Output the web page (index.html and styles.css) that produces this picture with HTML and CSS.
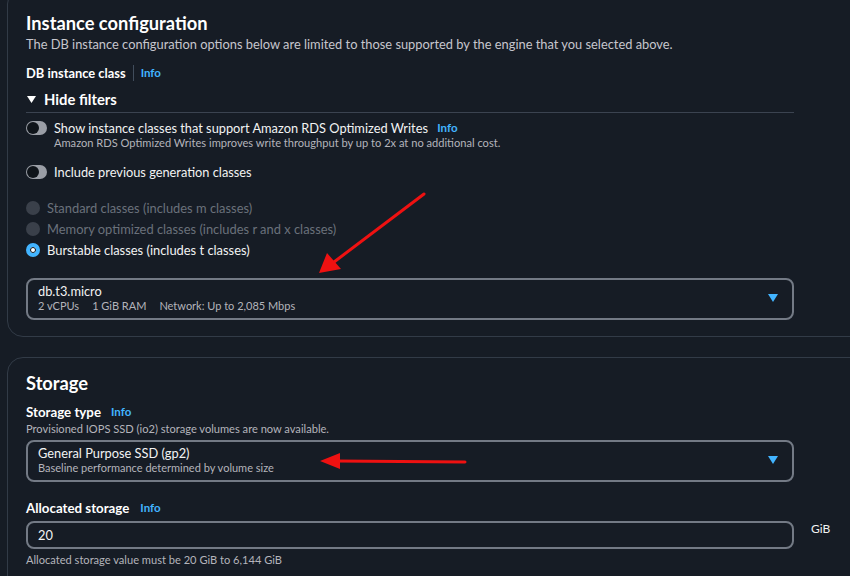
FILE: index.html
```html
<!DOCTYPE html>
<html lang="en">
<head>
<meta charset="utf-8">
<title>Instance configuration</title>
<link rel="stylesheet" href="styles.css">
</head>
<body>
<div class="page">
  <section class="panel panel-first">
    <h2 class="title">Instance configuration</h2>
    <p class="desc">The DB instance configuration options below are limited to those supported by the engine that you selected above.</p>
    <div class="label-row row-class">
      <span class="label">DB instance class</span>
      <span class="divider"></span>
      <span class="info">Info</span>
    </div>
    <div class="filters-head">
      <svg class="tri" width="9" height="7" viewBox="0 0 9 7"><path d="M0 0h9L4.5 7z" fill="#ffffff"/></svg>
      <span>Hide filters</span>
    </div>
    <div class="toggle-row toggle-first">
      <span class="toggle"><span class="knob"></span></span>
      <div class="toggle-text">
        <div class="toggle-label">Show instance classes that support Amazon RDS Optimized Writes <span class="info info-inline">Info</span></div>
        <div class="sub">Amazon RDS Optimized Writes improves write throughput by up to 2x at no additional cost.</div>
      </div>
    </div>
    <div class="toggle-row toggle-second">
      <span class="toggle"><span class="knob"></span></span>
      <div class="toggle-text">
        <div class="toggle-label">Include previous generation classes</div>
      </div>
    </div>
    <div class="radios">
      <div class="radio disabled"><span class="dot"></span><span>Standard classes (includes m classes)</span></div>
      <div class="radio disabled"><span class="dot"></span><span>Memory optimized classes (includes r and x classes)</span></div>
      <div class="radio checked"><span class="dot"></span><span>Burstable classes (includes t classes)</span></div>
    </div>
    <div class="select select-class">
      <div class="select-body">
        <div class="select-main">db.t3.micro</div>
        <div class="select-sub"><span>2 vCPUs</span><span>1 GiB RAM</span><span>Network: Up to 2,085 Mbps</span></div>
      </div>
      <svg class="caret" width="10" height="8" viewBox="0 0 10 8"><path d="M0 0h10L5 8z" fill="#42b4ff"/></svg>
    </div>
  </section>

  <section class="panel panel-second">
    <h2 class="title">Storage</h2>
    <div class="label-row row-storage">
      <span class="label">Storage type</span>
      <span class="info">Info</span>
    </div>
    <div class="sub sub-storage">Provisioned IOPS SSD (io2) storage volumes are now available.</div>
    <div class="select select-storage">
      <div class="select-body">
        <div class="select-main">General Purpose SSD (gp2)</div>
        <div class="select-sub">Baseline performance determined by volume size</div>
      </div>
      <svg class="caret" width="10" height="8" viewBox="0 0 10 8"><path d="M0 0h10L5 8z" fill="#42b4ff"/></svg>
    </div>
    <div class="label-row row-alloc">
      <span class="label">Allocated storage</span>
      <span class="info">Info</span>
    </div>
    <div class="input-row">
      <div class="input">20</div>
      <span class="unit">GiB</span>
    </div>
    <div class="sub sub-help">Allocated storage value must be 20 GiB to 6,144 GiB</div>
  </section>

  <svg class="arrows" width="850" height="576" viewBox="0 0 850 576">
    <line x1="424" y1="194" x2="334" y2="262" stroke="#ee1111" stroke-width="3" stroke-linecap="round"/>
    <path d="M319 273 L327 253 L341 269 Z" fill="#ee1111"/>
    <line x1="465" y1="462" x2="336" y2="461" stroke="#ee1111" stroke-width="3" stroke-linecap="round"/>
    <path d="M320 461 L340 453 L340 469 Z" fill="#ee1111"/>
  </svg>
</div>
</body>
</html>
```

FILE: styles.css
```css
* { box-sizing: border-box; }
html, body {
  margin: 0;
  padding: 0;
  background: #161c25;
  overflow: hidden;
}
body {
  font-family: Lato, "Open Sans", "Liberation Sans", sans-serif;
  color: #f2f3f3;
  width: 850px;
  height: 576px;
}
.page {
  position: relative;
  width: 850px;
  height: 576px;
  overflow: hidden;
  display: flex;
  flex-direction: column;
}
.panel {
  margin-left: 7px;
  width: 900px;
  border: 1px solid #323b47;
  border-radius: 16px;
  padding-left: 18px;
  padding-right: 0;
  display: flex;
  flex-direction: column;
  align-items: flex-start;
  flex-shrink: 0;
}
.panel-first {
  margin-top: -12px;
  padding-top: 23px;
  padding-bottom: 16px;
}
.panel-second {
  margin-top: 20px;
  padding-top: 14px;
  padding-bottom: 40px;
}
.title {
  margin: 0;
  font-size: 18.3px;
  line-height: 22px;
  font-weight: 700;
  color: #ffffff;
}
.desc {
  margin: 2px 0 0;
  font-size: 12.85px;
  line-height: 16px;
  color: #c6c6cd;
}
.label-row {
  display: flex;
  align-items: center;
  font-size: 12.9px;
  line-height: 16px;
}
.row-class { margin-top: 13px; }
.row-storage { margin-top: 10px; font-size: 13.3px; }
.row-alloc { margin-top: 18px; font-size: 13.3px; }
.label {
  font-weight: 700;
  color: #ffffff;
}
.divider {
  width: 1px;
  height: 16px;
  background: #414d5c;
  margin: 0 7px 0 7px;
}
.info {
  color: #42b4ff;
  font-weight: 700;
  font-size: 11.5px;
  line-height: 16px;
}
.row-storage .info { margin-left: 10px; }
.row-alloc .info { margin-left: 11px; }
.filters-head {
  margin-top: 8px;
  width: 768px;
  display: flex;
  align-items: center;
  font-size: 14.8px;
  line-height: 20px;
  font-weight: 700;
  color: #ffffff;
  padding-bottom: 3px;
  border-bottom: 1px solid #3b4350;
  height: 24px;
}
.tri { margin-left: 1px; margin-right: 8px; }
.toggle-row {
  display: flex;
  align-items: flex-start;
}
.toggle-first { margin-top: 7px; }
.toggle-second { margin-top: 14px; }
.toggle {
  width: 21px;
  height: 14px;
  border-radius: 7px;
  background: #9a9ea6;
  margin-top: 1px;
  margin-right: 7px;
  position: relative;
  flex-shrink: 0;
  display: flex;
  align-items: center;
  padding-left: 1px;
}
.knob {
  width: 12px;
  height: 12px;
  border-radius: 50%;
  background: #0f141a;
}
.toggle-label {
  font-size: 12.8px;
  line-height: 16px;
  height: 16px;
  color: #f2f3f3;
}
.info-inline { margin-left: 6px; vertical-align: top; }
.sub {
  font-size: 11.1px;
  line-height: 14px;
  color: #b4b4bb;
}
.radios {
  margin-top: 18px;
  display: flex;
  flex-direction: column;
  gap: 1px;
}
.radio {
  display: flex;
  align-items: center;
  font-size: 12.9px;
  line-height: 20px;
  color: #f2f3f3;
}
.radio .dot {
  width: 14px;
  height: 14px;
  border-radius: 50%;
  margin-right: 7px;
  flex-shrink: 0;
}
.radio.disabled { color: #6a717b; }
.radio.disabled .dot { background: #3a404a; }
.radio.checked .dot {
  background: #ffffff;
  border: 4px solid #42b4ff;
  box-shadow: inset 0 0 0 1px #0f141a;
}
.select {
  width: 768px;
  border: 2px solid #737a85;
  border-radius: 8px;
  display: flex;
  align-items: center;
  padding: 3px 14px 5px 10px;
}
.select-class { margin-top: 18px; }
.select-storage { margin-top: 4px; }
.select-body { flex: 1; }
.select-main {
  font-size: 12.8px;
  line-height: 16px;
  color: #f2f3f3;
}
.select-sub {
  font-size: 11px;
  line-height: 14px;
  color: #b4b4bb;
  display: flex;
  gap: 13px;
}
.caret { flex-shrink: 0; }
.sub-storage { margin-top: 2px; }
.input-row {
  margin-top: 5px;
  display: flex;
  align-items: flex-start;
}
.input {
  width: 768px;
  height: 28px;
  border: 2px solid #737a85;
  border-radius: 8px;
  padding: 0 10px;
  font-size: 12.8px;
  line-height: 24px;
  color: #f2f3f3;
}
.unit {
  margin-left: 17px;
  font-size: 12px;
  line-height: 16px;
  color: #f2f3f3;
}
.sub-help { margin-top: 4px; }
.arrows {
  position: absolute;
  left: 0;
  top: 0;
  pointer-events: none;
}
```
